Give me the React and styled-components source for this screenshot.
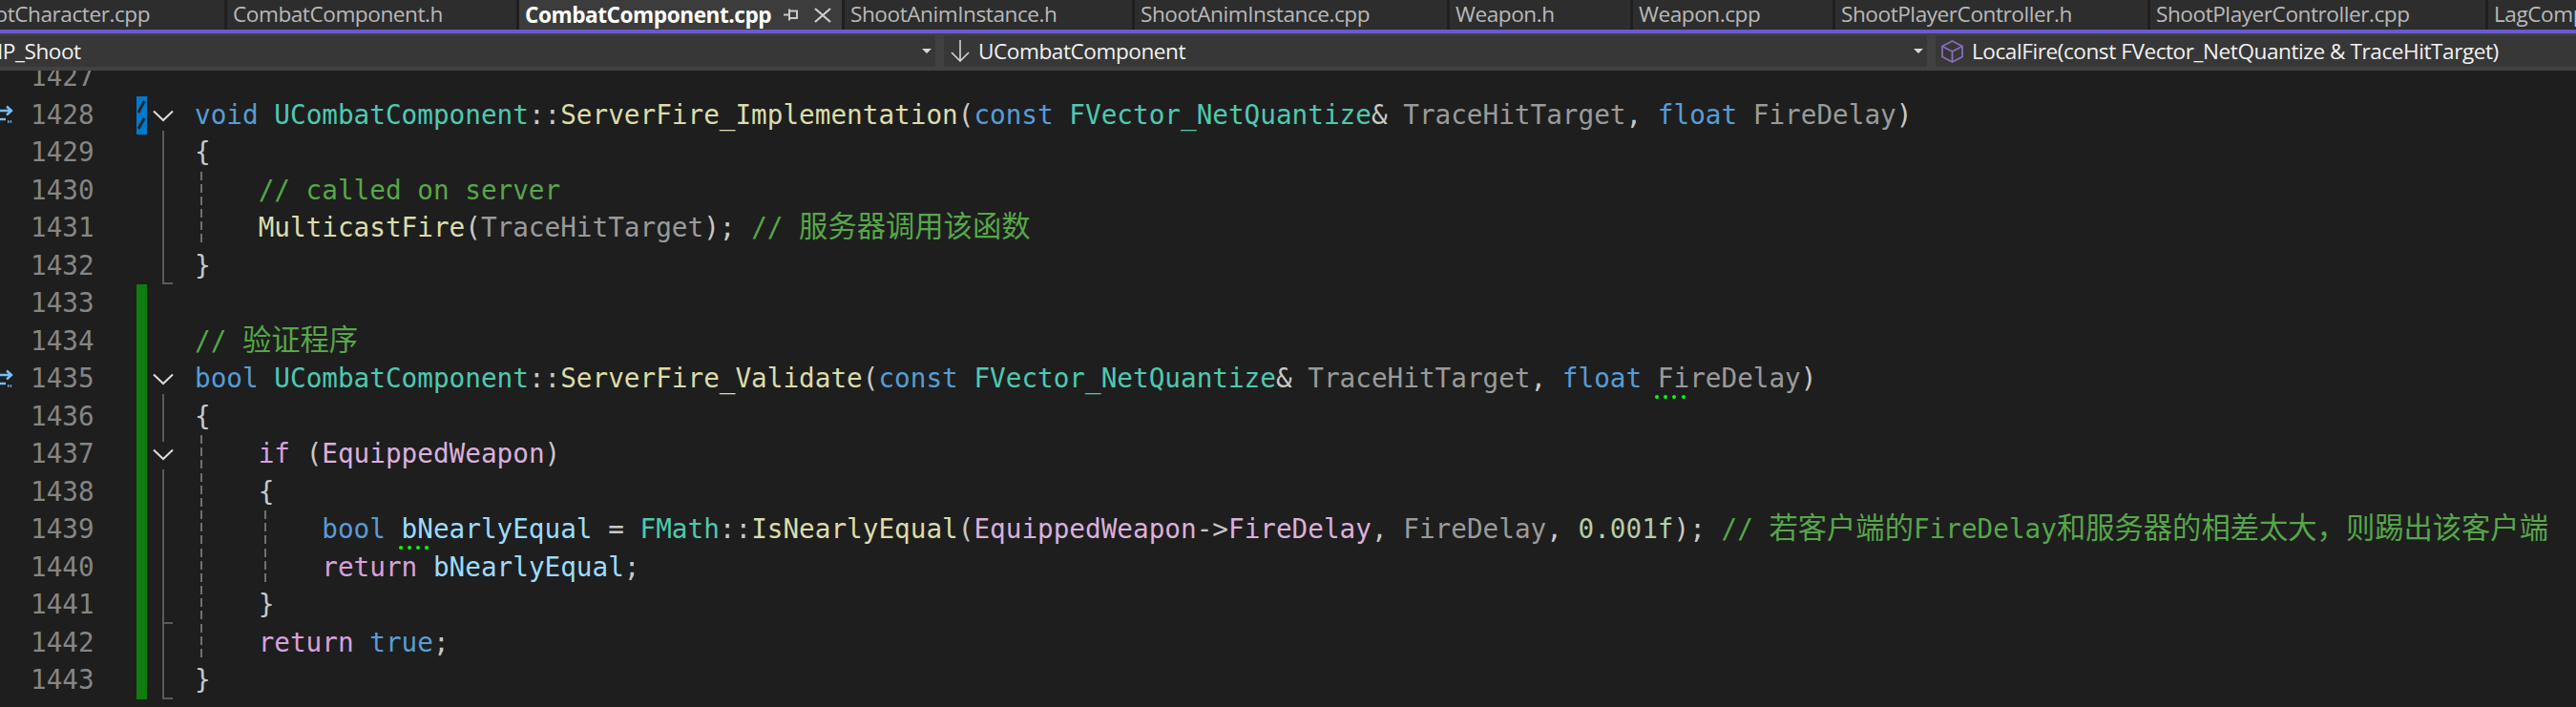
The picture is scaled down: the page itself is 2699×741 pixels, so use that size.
import React from "react";
import styled, { createGlobalStyle } from "styled-components";

const Global = createGlobalStyle`
  html, body { margin: 0; padding: 0; background: #1e1e1e; height: 100%; overflow: hidden; }
  #root { width: 2699px; height: 741px; overflow: hidden; }
`;

const Page = styled.div`
  width: 2699px;
  height: 741px;
  display: flex;
  flex-direction: column;
  overflow: hidden;
  background: #1e1e1e;
`;

const TabStrip = styled.div`
  display: flex;
  gap: 3px;
  height: 31px;
  flex: none;
  margin-left: -50px;
  background: #1f1f1f;
`;

const Tab = styled.div`
  flex: none;
  width: ${(p) => p.$width}px;
  height: 31px;
  padding-left: 6px;
  padding-bottom: ${(p) => (p.$active ? 0 : 2)}px;
  box-sizing: border-box;
  display: flex;
  align-items: center;
  justify-content: space-between;
  overflow: hidden;
  white-space: nowrap;
  background: ${(p) => (p.$active ? "#3c3c3c" : "#2d2d2d")};
  color: ${(p) => (p.$active ? "#ffffff" : "#b9b9b9")};
  font: ${(p) => (p.$active ? 700 : 400)} 22.6px/28px "Open Sans", sans-serif;
  letter-spacing: -0.45px;
`;

const TabTools = styled.span`
  display: flex;
  align-items: center;
  gap: 17px;
  padding-right: 11px;
  color: #c8c8c8;
`;

const AccentLine = styled.div`
  height: 4px;
  flex: none;
  background: #6a5acd;
`;

const NavBar = styled.div`
  height: 39px;
  flex: none;
  box-sizing: border-box;
  padding: 2px 0 4px;
  display: flex;
  gap: 9px;
  background: #414141;
`;

const NavBox = styled.div`
  flex: ${(p) => (p.$width ? `0 0 ${p.$width}px` : "1 1 0")};
  min-width: 0;
  height: 33px;
  display: flex;
  align-items: center;
  overflow: hidden;
  white-space: nowrap;
  background: #373737;
  color: #f1f1f1;
  font: 400 22.6px/33px "Open Sans", sans-serif;
  letter-spacing: -0.45px;
  padding-left: ${(p) => p.$pad ?? 0}px;
  box-sizing: border-box;
`;

const NavLabel = styled.span`
  flex: 1 1 auto;
  min-width: 0;
  margin-left: ${(p) => p.$indent ?? 0}px;
`;

const NavCaret = styled.span`
  flex: none;
  width: 0;
  height: 0;
  margin-right: 4px;
  border-left: 5px solid transparent;
  border-right: 5px solid transparent;
  border-top: 5px solid #d8d8d8;
`;

const Editor = styled.div`
  flex: 1 1 auto;
  overflow: hidden;
`;

const Rows = styled.div`
  display: grid;
  grid-auto-rows: 39.53px;
  margin-top: -13px;
`;

const Row = styled.div`
  display: flex;
  align-items: stretch;
  font: 400 27.68px/39.53px "DejaVu Sans Mono", monospace;
`;

const Marker = styled.div`
  flex: none;
  width: 32px;
  display: flex;
  align-items: center;
`;

const LineNo = styled.div`
  flex: none;
  width: 67px;
  color: #858585;
`;

const ChangeCell = styled.div`
  flex: none;
  width: 11px;
  margin-left: 44px;
  background: ${(p) => (p.$saved ? "#107c10" : "transparent")};
`;

const FoldCell = styled.div`
  flex: none;
  width: 33px;
  position: relative;
`;

const FoldLine = styled.span`
  position: absolute;
  left: 16px;
  width: 2px;
  top: ${(p) => p.$top}px;
  bottom: ${(p) => p.$bottom}px;
  background: #5a5a5a;
`;

const FoldTick = styled.span`
  position: absolute;
  left: 16px;
  width: 11px;
  height: 2px;
  bottom: 0;
  background: #5a5a5a;
`;

const Code = styled.div`
  flex: 1 1 auto;
  position: relative;
  padding-left: 17px;
  white-space: pre;
`;

const Guide = styled.span`
  position: absolute;
  top: 0;
  bottom: 0;
  left: ${(p) => p.$left}px;
  width: 2px;
  background: repeating-linear-gradient(to bottom, #707070 0 8.6px, transparent 8.6px 13.18px);
`;

const Dots = styled.span`
  position: absolute;
  left: -3px;
  top: 34px;
  display: flex;
  gap: 5.3px;
`;

const Dot = styled.span`
  width: 4px;
  height: 4px;
  border-radius: 50%;
  background: #00ff00;
`;

const COLORS = {
  kw: "#569cd6",
  type: "#4ec9b0",
  fn: "#dcdcaa",
  plain: "#c8c8c8",
  param: "#9a9a9a",
  local: "#9cdcfe",
  ctl: "#d8a0df",
  member: "#dab0dc",
  num: "#b5cea8",
  com: "#57a64a",
};

const Token = styled.span`
  position: relative;
  color: ${(p) => COLORS[p.$kind]};
`;

const Cjk = styled.span`
  font-family: "Noto Sans CJK SC", sans-serif;
  font-size: 30.3px;
  line-height: 1;
`;

const withCjk = (text) =>
  text.split(/([\u4e00-\u9fff\uff0c]+)/).map((part, i) =>
    i % 2 ? <Cjk key={i}>{part}</Cjk> : part
  );

const t = (kind, text, squiggle) => ({ kind, text, squiggle });

const LINES = [
  { n: 1427 },
  {
    n: 1428, mark: true, change: "edit", fold: "open",
    code: [
      t("kw", "void"), t("plain", " "), t("type", "UCombatComponent"), t("plain", "::"),
      t("fn", "ServerFire_Implementation"), t("plain", "("), t("kw", "const"), t("plain", " "),
      t("type", "FVector_NetQuantize"), t("plain", "& "), t("param", "TraceHitTarget"), t("plain", ", "),
      t("kw", "float"), t("plain", " "), t("param", "FireDelay"), t("plain", ")"),
    ],
  },
  { n: 1429, fold: "line", code: [t("plain", "{")] },
  { n: 1430, fold: "line", guides: [210], code: [t("com", "    // called on server")] },
  {
    n: 1431, fold: "line", guides: [210],
    code: [
      t("fn", "    MulticastFire"), t("plain", "("), t("param", "TraceHitTarget"), t("plain", "); "),
      t("com", "// 服务器调用该函数"),
    ],
  },
  { n: 1432, fold: "end", code: [t("plain", "}")] },
  { n: 1433, change: "saved" },
  { n: 1434, change: "saved", code: [t("com", "// 验证程序")] },
  {
    n: 1435, mark: true, change: "saved", fold: "open",
    code: [
      t("kw", "bool"), t("plain", " "), t("type", "UCombatComponent"), t("plain", "::"),
      t("fn", "ServerFire_Validate"), t("plain", "("), t("kw", "const"), t("plain", " "),
      t("type", "FVector_NetQuantize"), t("plain", "& "), t("param", "TraceHitTarget"), t("plain", ", "),
      t("kw", "float"), t("plain", " "), t("param", "FireDelay", true), t("plain", ")"),
    ],
  },
  { n: 1436, change: "saved", fold: "line", code: [t("plain", "{")] },
  {
    n: 1437, change: "saved", fold: "nested", guides: [210],
    code: [t("ctl", "    if"), t("plain", " ("), t("member", "EquippedWeapon"), t("plain", ")")],
  },
  { n: 1438, change: "saved", fold: "line", guides: [210], code: [t("plain", "    {")] },
  {
    n: 1439, change: "saved", fold: "line", guides: [210, 277],
    code: [
      t("kw", "        bool"), t("plain", " "), t("local", "bNearlyEqual", true), t("plain", " = "),
      t("type", "FMath"), t("plain", "::"), t("fn", "IsNearlyEqual"), t("plain", "("),
      t("member", "EquippedWeapon"), t("plain", "->"), t("member", "FireDelay"), t("plain", ", "),
      t("param", "FireDelay"), t("plain", ", "), t("num", "0.001f"), t("plain", "); "),
      t("com", "// 若客户端的FireDelay和服务器的相差太大\uff0c则踢出该客户端"),
    ],
  },
  {
    n: 1440, change: "saved", fold: "line", guides: [210, 277],
    code: [t("ctl", "        return"), t("plain", " "), t("local", "bNearlyEqual"), t("plain", ";")],
  },
  { n: 1441, change: "saved", fold: "tick", guides: [210], code: [t("plain", "    }")] },
  {
    n: 1442, change: "saved", fold: "line", guides: [210],
    code: [t("ctl", "    return"), t("plain", " "), t("kw", "true"), t("plain", ";")],
  },
  { n: 1443, change: "saved", fold: "end", code: [t("plain", "}")] },
];

const TABS = [
  { name: "ShootCharacter.cpp", width: 285 },
  { name: "CombatComponent.h", width: 303 },
  { name: "CombatComponent.cpp", width: 338, active: true },
  { name: "ShootAnimInstance.h", width: 301 },
  { name: "ShootAnimInstance.cpp", width: 327 },
  { name: "Weapon.h", width: 189 },
  { name: "Weapon.cpp", width: 209 },
  { name: "ShootPlayerController.h", width: 327 },
  { name: "ShootPlayerController.cpp", width: 351 },
  { name: "LagCompensationComponent.cpp", width: 420 },
];

const PinIcon = () => (
  <svg width="15" height="13" viewBox="0 0 15 13" fill="none" stroke="#c8c8c8" strokeWidth="2">
    <path d="M0 6.5H6M6 0.5V12.5M6 2.5H14V10H6" />
  </svg>
);

const CloseIcon = () => (
  <svg width="18" height="16" viewBox="0 0 18 16" fill="none" stroke="#cfcfcf" strokeWidth="2.2">
    <path d="M1 1L17 15M17 1L1 15" />
  </svg>
);

const ArrowDownIcon = () => (
  <svg width="20" height="23" viewBox="0 0 20 23" fill="none" stroke="#d4d4d4" strokeWidth="1.6">
    <path d="M10 0V22M1 13L10 22L19 13" />
  </svg>
);

const CubeIcon = () => (
  <svg width="23" height="24" viewBox="0 0 23 24" fill="none" stroke="#8a6cb8" strokeWidth="1.8">
    <path d="M11.5 1L22 6.5V17.5L11.5 23L1 17.5V6.5Z" />
    <path d="M1 6.5L11.5 12L22 6.5M11.5 12V23" />
  </svg>
);

const JumpIcon = () => (
  <svg width="14" height="20" viewBox="0 0 14 20" fill="none">
    <path d="M-2 6H11M7 1.5L12 6L7 10.5" stroke="#75beff" strokeWidth="2.4" />
    <path d="M-2 15H6" stroke="#75beff" strokeWidth="2.4" />
    <path d="M8 17.5H13" stroke="#75beff" strokeWidth="2.4" strokeDasharray="1.4 1.3" />
  </svg>
);

const EditHatch = () => (
  <svg width="11" height="40" viewBox="0 0 11 40" style={{ display: "block" }}>
    <rect width="11" height="40" fill="#007acc" />
    <path d="M8.3 5L2 17M8.3 23L2 34" stroke="#1e2a33" strokeWidth="3" fill="none" />
  </svg>
);

const Chevron = () => (
  <svg
    width="22"
    height="13"
    viewBox="0 0 22 13"
    fill="none"
    stroke="#dcdcdc"
    strokeWidth="2"
    style={{ position: "absolute", left: 6, top: 14 }}
  >
    <path d="M1 1.5L11 11L21 1.5" />
  </svg>
);

const Fold = ({ kind }) => (
  <FoldCell>
    {(kind === "open" || kind === "nested") && (
      <>
        <Chevron />
        <FoldLine $top={36} $bottom={0} />
      </>
    )}
    {kind === "nested" && <FoldLine $top={0} $bottom={33} />}
    {(kind === "line" || kind === "tick" || kind === "end") && <FoldLine $top={0} $bottom={0} />}
    {(kind === "tick" || kind === "end") && <FoldTick />}
  </FoldCell>
);

export default function App() {
  return (
    <Page>
      <Global />
      <TabStrip>
        {TABS.map((tab) => (
          <Tab key={tab.name} $width={tab.width} $active={tab.active}>
            {tab.name}
            {tab.active && (
              <TabTools>
                <PinIcon />
                <CloseIcon />
              </TabTools>
            )}
          </Tab>
        ))}
      </TabStrip>
      <AccentLine />
      <NavBar>
        <NavBox $width={980}>
          <NavLabel $indent={-17}>MP_Shoot</NavLabel>
          <NavCaret />
        </NavBox>
        <NavBox $width={1030} $pad={7}>
          <ArrowDownIcon />
          <NavLabel $indent={9}>UCombatComponent</NavLabel>
          <NavCaret />
        </NavBox>
        <NavBox $pad={6}>
          <CubeIcon />
          <NavLabel $indent={9}>LocalFire(const FVector_NetQuantize &amp; TraceHitTarget)</NavLabel>
        </NavBox>
      </NavBar>
      <Editor>
        <Rows>
          {LINES.map((line) => (
            <Row key={line.n}>
              <Marker>{line.mark && <JumpIcon />}</Marker>
              <LineNo>{line.n}</LineNo>
              <ChangeCell $saved={line.change === "saved"}>
                {line.change === "edit" && <EditHatch />}
              </ChangeCell>
              <Fold kind={line.fold} />
              <Code>
                {(line.guides || []).map((left) => (
                  <Guide key={left} $left={left - 187} />
                ))}
                {(line.code || []).map((tok, i) => (
                  <Token key={i} $kind={tok.kind}>
                    {withCjk(tok.text)}
                    {tok.squiggle && (
                      <Dots>
                        <Dot />
                        <Dot />
                        <Dot />
                        <Dot />
                      </Dots>
                    )}
                  </Token>
                ))}
              </Code>
            </Row>
          ))}
        </Rows>
      </Editor>
    </Page>
  );
}
